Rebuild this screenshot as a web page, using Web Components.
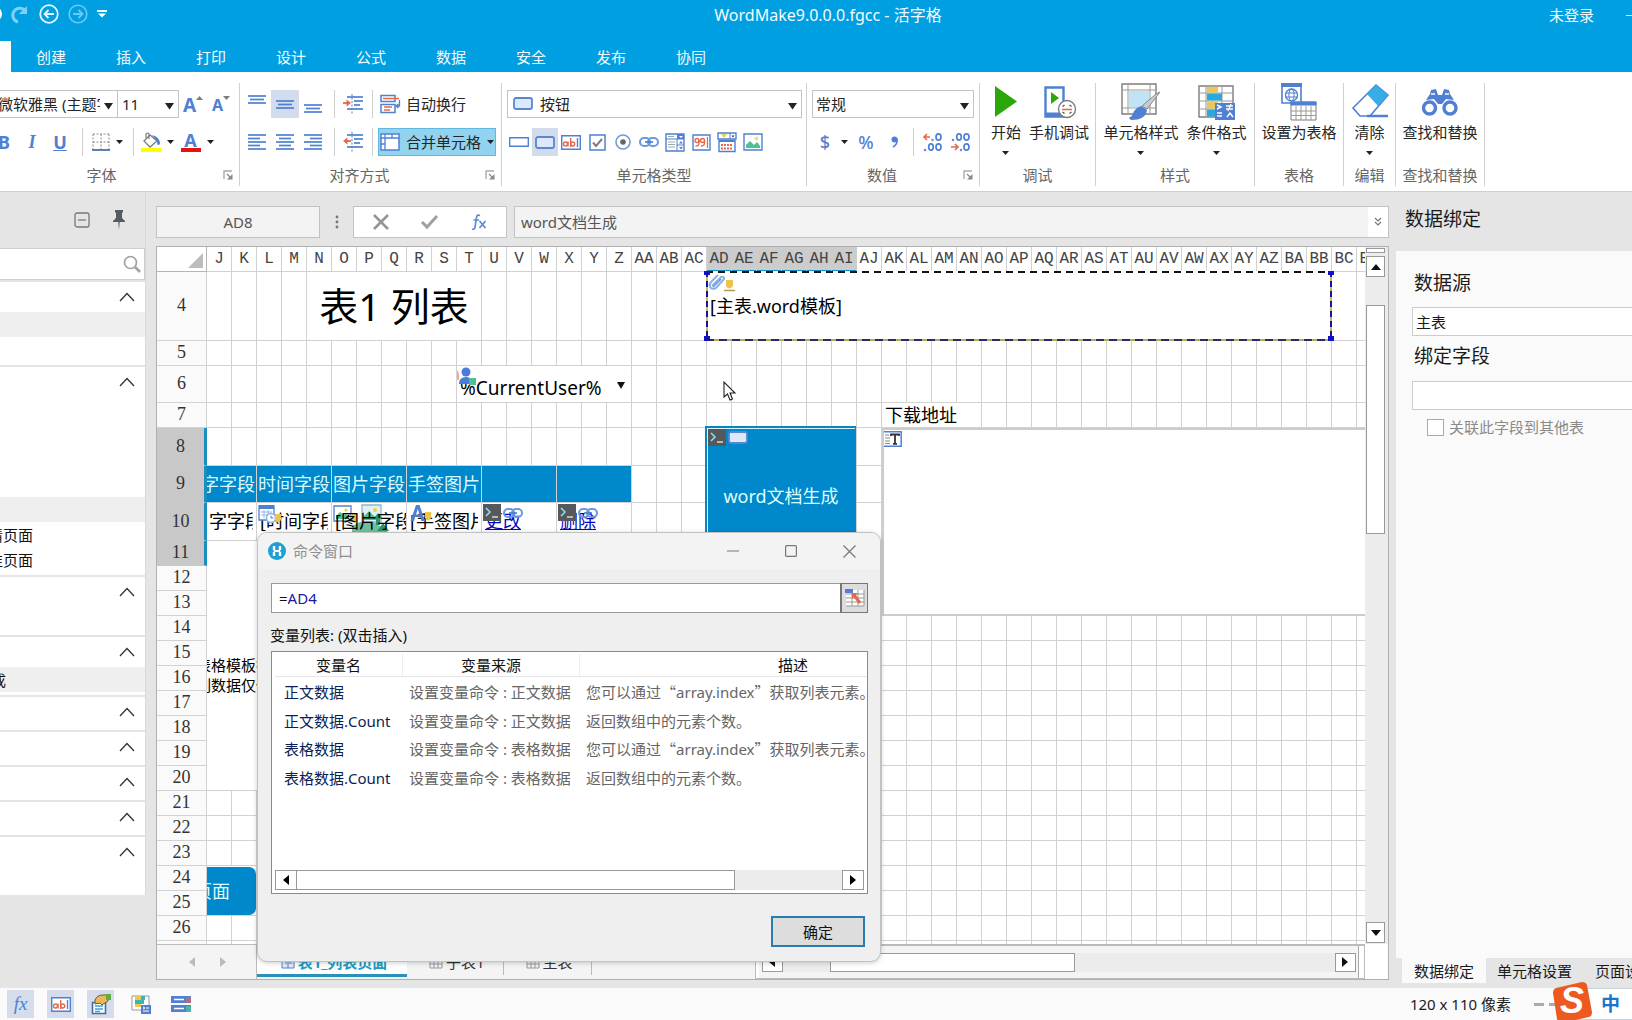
<!DOCTYPE html>
<html lang="zh-CN">
<head>
<meta charset="utf-8">
<title>WordMake9.0.0.0.fgcc - 活字格</title>
<style>
html,body{margin:0;height:100%}
body{font:15px/20px "Noto Sans","Noto Sans CJK SC",sans-serif;color:#262626;overflow:hidden;background:#e5e5e5}
</style>
</head>
<body>
<fg-app></fg-app>
<script>
const RESET = `*{box-sizing:border-box}
button,input,select{font:inherit;color:inherit;margin:0;padding:0;border:0;background:none;border-radius:0;outline:0}
button{display:flex;align-items:center;justify-content:center}
select{appearance:none}
fg-icon{flex:none}`;

function define(name, css, html, setup) {
  const tpl = document.createElement('template');
  customElements.define(name, class extends HTMLElement {
    connectedCallback() {
      if (this.shadowRoot) return;
      const root = this.attachShadow({ mode: 'open' });
      tpl.innerHTML = `<style>${RESET}${css}</style>` + (typeof html === 'function' ? html(this) : html);
      root.append(tpl.content.cloneNode(true));
      if (setup) setup(root, this);
    }
  });
}

const B = '#4f80d2', G = '#7d7d7d', O = '#e2694a';
const lines = (a) => `<g stroke="${B}" stroke-width="1.700">` + a.map(([x1, x2, y]) => `<path d="M${x1} ${y}H${x2}"/>`).join('') + '</g>';
/* name: [width, height, markup] */
const ICONS = {
  undo: [8, 20, '<circle cx="-6" cy="10" r="8" fill="#fff"/>'],
  redo: [20, 20, '<path d="M8 18A7 7 0 1 1 16 8" fill="none" stroke="#7fd0f4" stroke-width="3"/><path d="M17 2v8h-8z" fill="#7fd0f4"/>'],
  back: [20, 20, '<circle cx="10" cy="10" r="8.8" fill="none" stroke="#e6f7ff" stroke-width="1.8"/><path d="M15 10H6M9.500 6L5.500 10l4 4" fill="none" stroke="#e6f7ff" stroke-width="1.8"/>'],
  fwd: [20, 20, '<circle cx="10" cy="10" r="8.800" fill="none" stroke="#6cc9f3" stroke-width="1.600"/><path d="M5 10h9M10.500 6l4 4-4 4" fill="none" stroke="#6cc9f3" stroke-width="1.800"/>'],
  qat: [10, 8, '<path d="M0 1h10" stroke="#fff" stroke-width="2"/><path d="M1 3.500h8l-4 4z" fill="#fff"/>'],
  caret: [9, 7, '<path d="M0 0h9L4.500 6.500z" fill="#222"/>'],
  caretS: [7, 4, '<path d="M0 0h7L3.500 4z" fill="#222"/>'],
  caretM: [8, 7, '<path d="M0 0h8L4 7z" fill="#111"/>'],
  up: [7, 5, `<path d="M0 4h7L3.500 0z" fill="${G}"/>`],
  down: [7, 5, `<path d="M0 0h7L3.500 4z" fill="${G}"/>`],
  border: [18, 18, '<path d="M1 1h16M1 9h16M1 1v15M9 1v15M17 1v15" stroke="#8a8a8a" stroke-dasharray="2 1.500" fill="none"/><path d="M0 17h18" stroke="#5f7fae" stroke-width="2"/>'],
  bucket: [20, 20, `<path d="M3 9l6-6 7 6-7 6z" fill="#fff" stroke="${G}" stroke-width="1.300"/><path d="M5 6V2q2-2 3 0v5" fill="none" stroke="${G}" stroke-width="1.200"/><path d="M11 3q8 2 8 9-3 3-3-3z" fill="${B}"/><path d="M0 16h20v4H0z" fill="#ff0"/>`],
  atop: [18, 20, lines([[0, 18, 2], [2, 16, 5.500], [0, 18, 9]])],
  amid: [18, 20, lines([[0, 18, 7], [2, 16, 10.500], [0, 18, 14]])],
  abot: [18, 20, lines([[0, 18, 11], [2, 16, 14.500], [0, 18, 18]])],
  aleft: [18, 16, lines([[0, 18, 1], [0, 12, 4.500], [0, 18, 8], [0, 12, 11.500], [0, 18, 15]])],
  acenter: [18, 16, lines([[0, 18, 1], [3, 15, 4.500], [0, 18, 8], [3, 15, 11.500], [0, 18, 15]])],
  aright: [18, 16, lines([[0, 18, 1], [6, 18, 4.500], [0, 18, 8], [6, 18, 11.500], [0, 18, 15]])],
  indent: [20, 20, `<path d="M9 0v20" stroke="${B}" stroke-dasharray="2 1.500"/>` + lines([[4, 20, 3], [11, 20, 7], [11, 17, 11], [4, 20, 15]]) + `<path d="M0 9h6" stroke="${O}" stroke-width="1.800"/><path d="M3.500 5.500v7L8 9z" fill="${O}"/>`],
  outdent: [20, 20, `<path d="M9 0v20" stroke="${B}" stroke-dasharray="2 1.500"/>` + lines([[4, 20, 3], [11, 20, 7], [11, 17, 11], [4, 20, 15]]) + `<path d="M2 9h6" stroke="${O}" stroke-width="1.800"/><path d="M4.500 5.500v7L0 9z" fill="${O}"/>`],
  wrap: [20, 20, `<path d="M1 1.500h14v6H1zM1 10.500h14v8H1z" fill="#fff" stroke="${B}" stroke-width="1.500"/><path d="M3 4.500h16M4 13h8M4 16h6" stroke="${O}" stroke-width="1.400"/><path d="M19.500 6v6h-3M18.500 10l-2.500 2 2.500 2" fill="none" stroke="${B}" stroke-width="1.300"/>`],
  merge: [20, 18, `<path d="M1 1h18v16H1z" fill="#fff" stroke="${B}" stroke-width="1.500"/><path d="M1 5h18M5 1v16M12 1v4M1 11h4" stroke="${B}" stroke-width="1.300" fill="none"/>`],
  launch: [10, 10, '<path d="M1 9V1h8" fill="none" stroke="#aaa" stroke-width="1.400"/><path d="M4 4l3 3" stroke="#888" stroke-width="1.300"/><path d="M9.500 4v5.500H4z" fill="#888"/>'],
  rect: [20, 10, `<path d="M.7.700h18.600v8.600H.7z" fill="#fff" stroke="${B}" stroke-width="1.400"/>`],
  btn: [20, 13, `<rect x="1" y="1" width="18" height="11" rx="2" fill="#dce9fb" stroke="#5a86cf" stroke-width="1.800"/>`],
  ab: [20, 15, `<path d="M.7.700h18.600v13.600H.7z" fill="#fff" stroke="${B}" stroke-width="1.400"/><circle cx="4.500" cy="9" r="2" fill="none" stroke="${O}" stroke-width="1.400"/><path d="M7 6.500v5M9.700 3v9" stroke="${O}" stroke-width="1.400"/><circle cx="11.700" cy="9" r="2" fill="none" stroke="${O}" stroke-width="1.400"/><path d="M16.500 3v9" stroke="${B}" stroke-width="1.400"/>`],
  check: [17, 17, `<path d="M1 1h15v15H1z" fill="#fff" stroke="${B}" stroke-width="1.500"/><path d="M4 8.500l3 3.500 6-7" fill="none" stroke="${G}" stroke-width="2"/>`],
  radio: [16, 16, `<circle cx="8" cy="8" r="7" fill="#fff" stroke="#6f9add" stroke-width="1.600"/><circle cx="8" cy="8" r="2.800" fill="#666"/>`],
  link: [20, 10, `<rect x="1" y="1" width="10" height="8" rx="4" fill="none" stroke="#6c98de" stroke-width="2"/><rect x="9" y="1" width="10" height="8" rx="4" fill="none" stroke="#6c98de" stroke-width="2"/><path d="M6 5h8" stroke="#4a7bd0" stroke-width="1.600"/>`],
  combo: [20, 19, `<path d="M1 1h18v17H1z" fill="#fff" stroke="${B}" stroke-width="1.400"/><path d="M12 1h7v5h-7z" fill="${B}"/><path d="M14 3h4l-2 2z" fill="#fff"/><path d="M1 6h18M12 6v12M12 12h7" stroke="${B}"/><path d="M3 3.500h6M3 9h7M3 11.500h7M3 14h7" stroke="#9aa"/><path d="M14 10.500h4l-2-2.500zM14 14h4l-2 2.500z" fill="${B}"/>`],
  num: [19, 17, `<path d="M1 1h17v15H1z" fill="#fff" stroke="${B}" stroke-width="1.400"/><circle cx="5" cy="6.500" r="2" fill="none" stroke="${O}" stroke-width="1.300"/><circle cx="10.500" cy="6.500" r="2" fill="none" stroke="${O}" stroke-width="1.300"/><path d="M7 6v3q0 3-3.500 3M12.500 6v3q0 3-3.500 3" fill="none" stroke="${O}" stroke-width="1.300"/><path d="M15.500 3v11" stroke="${O}" stroke-width="1.200"/>`],
  date: [20, 20, `<path d="M1 1h18v6H1z" fill="#fff" stroke="${B}" stroke-width="1.400"/><path d="M4 2l3 4 3-4z" fill="#e8d14a"/><path d="M13 1v6" stroke="${B}"/><path d="M14.500 3.500h3L16 5.500z" fill="#333"/><path d="M2 8.500h16v11H2z" fill="#fff" stroke="${B}" stroke-width="1.400"/><path d="M2 9.500h16" stroke="${B}"/><path d="M4 13h12M4 16.500h12" stroke="${O}" stroke-width="1.800" stroke-dasharray="2 1"/>`],
  img: [20, 18, `<path d="M1 1h18v16H1z" fill="#fff" stroke="${B}" stroke-width="1.400"/><path d="M3 15v-3l4-4 4 4 3-3 3 4v2z" fill="#4fbf94"/><circle cx="13.500" cy="5.500" r="2" fill="#eadf96"/>`],
  comma: [7, 12, `<circle cx="3.500" cy="3.500" r="3" fill="${B}"/><path d="M6 3q1 5-4 8" fill="none" stroke="${B}" stroke-width="1.600"/>`],
  dec1: [20, 20, `<path d="M1 5h6M4 2L1 5l3 3" stroke="${O}" stroke-width="1.600" fill="none"/><g fill="none" stroke="${B}" stroke-width="1.700"><circle cx="9.500" cy="8" r=".4"/><ellipse cx="15.500" cy="5" rx="2.500" ry="3.200"/><circle cx="2" cy="18" r=".4"/><ellipse cx="8" cy="15" rx="2.300" ry="3.200"/><ellipse cx="15.500" cy="15" rx="2.500" ry="3.200"/></g>`],
  dec2: [20, 20, `<path d="M0 15h7M4 12l3 3-3 3" stroke="${O}" stroke-width="1.600" fill="none"/><g fill="none" stroke="${B}" stroke-width="1.700"><circle cx="2" cy="8" r=".4"/><ellipse cx="8" cy="5" rx="2.300" ry="3.200"/><ellipse cx="15.500" cy="5" rx="2.500" ry="3.200"/><circle cx="10" cy="18" r=".4"/><ellipse cx="15.500" cy="15" rx="2.500" ry="3.200"/></g>`],
  play: [22, 34, '<path d="M0 1v31L22 16.500z" fill="#2aa80a"/>'],
  phone: [30, 36, `<path d="M1.500 3.500h18v29h-18z" fill="#fff" stroke="${B}" stroke-width="2.400"/><path d="M1 28.500h19v4H1z" fill="${B}"/><path d="M7 8v12l8-6z" fill="#2aa80a"/><circle cx="23" cy="25" r="8.500" fill="#fff" stroke="${G}" stroke-width="1.400"/><path d="M18.500 22.500l2 -1.500M27.500 22.500l-2-1.500M18.500 28l2 1.500M27.500 28l-2 1.500" stroke="#555" stroke-width="1.300"/><path d="M18 25.500h10" stroke="${O}" stroke-width="1.500"/>`],
  cellstyle: [40, 38, `<path d="M1 1h34v30H1z" fill="#fff" stroke="${G}" stroke-width="1.400"/><path d="M7 1v30M29 1v30M1 7h34M1 25h34" stroke="#999"/><path d="M8 8h20v16H8z" fill="#c0e4f5"/><path d="M39 9L26 26l-5-3L35 11z" fill="#c9ccd0" stroke="#888"/><path d="M20 23l6 4q-1 10-16 10-3-2-1-3 2 0 4-6 3-4 7-5z" fill="${B}"/>`],
  cond: [38, 38, `<path d="M1 3h34v31H1z" fill="#fff" stroke="${G}" stroke-width="1.400"/><path d="M1 10h34M1 18h34M1 26h34M8 3v31M24 3v31" stroke="#999"/><path d="M9 3.700h11v6H9zM9 18.500h11v7H9z" fill="#e9c75a"/><path d="M9 10.500h15v7H9zM9 26.500h8v7H9z" fill="#29a9e0"/><path d="M17 20h20v17H17z" fill="${B}"/><path d="M19 22l4 2-4 2M19 30h5M19 33h5M28 23h7M28 26h7M33 21l-3 7M29 34l3-4 3 4" stroke="#fff" stroke-width="1.400" fill="none"/>`],
  fmt: [36, 38, `<path d="M1 1h19v19H1z" fill="#fff" stroke="${B}" stroke-width="1.600"/><path d="M0 0h21v4H0z" fill="${B}"/><circle cx="10.500" cy="12" r="6" fill="none" stroke="${B}" stroke-width="1.300"/><ellipse cx="10.500" cy="12" rx="2.600" ry="6" fill="none" stroke="${B}"/><path d="M4.500 10h12M4.500 14h12" stroke="${B}"/><path d="M10 19h25v18H10z" fill="#fff" stroke="${G}"/><path d="M9.500 18.500h26v4h-26z" fill="${B}"/><path d="M10 28h25M10 32.500h25M15 23v14M20 23v14M25 23v14M30 23v14" stroke="#999"/>`],
  eraser: [38, 36, `<path d="M2 24L25 1l12 10-18 21H9z" fill="#fff" stroke="${B}" stroke-width="1.600"/><path d="M25 1l12 10-10 11L16 10z" fill="#35aee8"/><path d="M16 32h21" stroke="${B}" stroke-width="2.500"/>`],
  find: [36, 30, `<g fill="#fff" stroke="${B}" stroke-width="3.400"><circle cx="7.500" cy="21" r="6"/><circle cx="28" cy="21" r="6"/></g><path d="M4 13l4-6 1-4 5-1 2 6h4l2-6 5 1 1 4 4 6-8-1-4 5h-4l-4-5z" fill="${B}"/><path d="M9 7h4M23 7h4" stroke="#fff" stroke-width="1.600"/>`],
  collapse: [16, 16, '<rect x="1" y="1" width="14" height="14" rx="2" fill="none" stroke="#777" stroke-width="1.300"/><path d="M4 8h8" stroke="#777" stroke-width="1.300"/>'],
  pin: [12, 20, '<path d="M2 0h8v2L9 3v5l3 3v1H0v-1l3-3V3L2 2zM5.300 12h1.400L6 20z" fill="#555b63"/>'],
  search: [18, 18, '<circle cx="7.500" cy="7.500" r="6" fill="none" stroke="#a2a2a2" stroke-width="1.700"/><path d="M12 12l5 5" stroke="#a2a2a2" stroke-width="2.600"/>'],
  chev: [16, 10, '<path d="M1 9l7-7.500L15 9" fill="none" stroke="#333" stroke-width="1.300"/>'],
  dots: [4, 14, '<g fill="#777"><circle cx="2" cy="2" r="1.400"/><circle cx="2" cy="7" r="1.400"/><circle cx="2" cy="12" r="1.400"/></g>'],
  no: [16, 16, '<path d="M1 1l14 14M15 1L1 15" stroke="#959595" stroke-width="2.600"/>'],
  yes: [17, 14, '<path d="M1 7l5 5L16 1" fill="none" stroke="#a0a0a0" stroke-width="3"/>'],
  fx: [16, 16, `<path d="M9 1.500q-3-1.500-3.500 2L4 13q-.5 3-3 2M2.500 6h5.500M8.500 7l6 7M14.500 7l-6 7" fill="none" stroke="#5b8ad6" stroke-width="1.700"/>`],
  expand: [8, 10, '<path d="M1 1l3 3 3-3M1 5l3 3 3-3" fill="none" stroke="#777" stroke-width="1.200"/>'],
  corner: [15, 15, '<path d="M15 0v15H0z" fill="#bdbdbd"/>'],
  term: [18, 17, '<path d="M0 0h18v17H0z" fill="#55585c"/><path d="M3 4l4 4-4 4" fill="none" stroke="#8fe0f0" stroke-width="1.500"/><path d="M9 13h6" stroke="#e8d9b0" stroke-width="1.500"/>'],
  clip: [18, 17, '<path d="M4 13l9-9q3-1 3 2l-8 9q-4 2-6-1-1-3 1-5l7-7" fill="none" stroke="#8ab0e8" stroke-width="2"/><path d="M5 14l8-8" stroke="#6f99db" stroke-width="1.600"/>'],
  bulb: [11, 13, '<path d="M2 1h7v6q-3.500 5-7 0z" fill="#ecc44d"/><path d="M0 11.500h11" stroke="#b59a45" stroke-width="1.500"/>'],
  user: [20, 20, '<path d="M0 2q4 4 3 12H0z" fill="#f3a8a8"/><circle cx="10" cy="6" r="4.500" fill="#4a7bd8"/><path d="M3 18q0-7 7-7t7 7z" fill="#4a7bd8"/><path d="M13 12h7v7h-7z" fill="#4fbf9a"/>'],
  cal: [24, 19, `<path d="M1 2h15v14H1z" fill="#fff" stroke="${B}" stroke-width="1.300"/><path d="M1 1h15v4H1z" fill="${B}"/><path d="M3 8h11M3 11h11M6 6v8M10 6v8" stroke="#9ab5e8"/><circle cx="13" cy="14" r="4.500" fill="#fff" stroke="#8ab0e8" stroke-width="1.500"/><path d="M13 11.500V14h2.500" stroke="${B}" fill="none"/><path d="M17 10h6v6q-3 5-6 0z" fill="#ecc44d"/>`],
  imgs: [56, 28, `<path d="M1 2h17v15H1z" fill="#fff" stroke="${B}" stroke-width="1.300"/><path d="M3 15v-3l4-4 4 3 2-1 3 3v2z" fill="#4fbf94"/><circle cx="13" cy="6" r="1.600" fill="#e8d14a"/><path d="M18 10h6v6q-3 5-6 0z" fill="#ecc44d"/><path d="M19 22l8-4h14l14 10H19z" fill="#55b58c" opacity=".85"/><path d="M29 1h19v17H29z" fill="#dff1f3" stroke="#8fb8cc" stroke-width="1.300"/><path d="M31 16v-4l5-5 5 5 5 4z" fill="#4fbf94"/><circle cx="42" cy="6" r="2" fill="#e8d14a"/><path d="M45 9l5 6h-3v6h-4v-6h-3zM50 19l6 8H44z" fill="#2d9468"/>`],
  sign: [24, 18, `<path d="M8 1h3.500L17 17h-3.500l-1.300-4H7.200L6 17H2.500zM8 10.500h3.500L9.800 5z" fill="${B}"/><path d="M17 8h6v6q-3 5-6 0z" fill="#ecc44d"/>`],
  tbox: [20, 16, `<path d="M.8.800h18.400v14.400H.8z" fill="#fff" stroke="${B}" stroke-width="1.500"/><path d="M3 4h4M3 7h5M3 10h5M3 12.500h5" stroke="#888"/><path d="M9 5V3.500h8V5M13 3.500v9M11 12.800h4" stroke="#333" stroke-width="1.800" fill="none"/>`],
  cursor: [13, 20, '<path d="M1 1v15l3.500-3 2.500 6 2.500-1-2.500-6H12z" fill="#fff" stroke="#222" stroke-width="1.100"/>'],
  tl: [7, 10, '<path d="M6 0v10L0 5z" fill="currentColor"/>'],
  tr: [7, 10, '<path d="M0 0v10l6-5z" fill="currentColor"/>'],
  tu: [10, 6, '<path d="M0 6h10L5 0z" fill="currentColor"/>'],
  td: [10, 6, '<path d="M0 0h10L5 6z" fill="currentColor"/>'],
  page: [14, 14, `<path d="M1 1h12v12H1z" fill="#e4ecfa" stroke="${B}"/><path d="M1 5h12M4 8h2M8 8h3M7 5v8" stroke="${B}"/>`],
  grid: [14, 14, '<path d="M1 1h12v12H1zM1 5h12M1 9h12M5 1v12M9 1v12" fill="none" stroke="#999"/>'],
  logo: [18, 18, '<circle cx="9" cy="9" r="9" fill="#1ea0d6"/><path d="M6 4v10M12 4v10" stroke="#fff" stroke-width="2.400" stroke-dasharray="4.300 1.400"/><path d="M6 9h6" stroke="#fff" stroke-width="1.800"/>'],
  min: [12, 12, '<path d="M0 6h12" stroke="#777"/>'],
  max: [12, 12, '<rect x=".6" y=".6" width="10.800" height="10.800" rx="1" fill="none" stroke="#777" stroke-width="1.200"/>'],
  close: [13, 13, '<path d="M.5.500l12 12M12.500.500l-12 12" stroke="#777" stroke-width="1.200"/>'],
  pick: [20, 18, `<path d="M1 1h18v16H1z" fill="#fff"/><path d="M1 5h18M1 9h18M1 13h18M1 17h18M7 1v16M13 1v16M19 1v16" stroke="#999"/><path d="M0 0h8v4H0z" fill="${B}"/><path d="M9 6l6 8" stroke="${O}" stroke-width="3"/><path d="M7 4h6l-6 6z" fill="${O}"/>`],
  hand: [20, 20, `<path d="M1.500 8.500h13v11h-13z" fill="#fff" stroke="#3f6fae" stroke-width="1.600"/><path d="M4 12h8M4 15h8M4 17.500h5" stroke="#3aa6e0" stroke-width="1.400"/><path d="M4 6q2-5 8-5h5v6l-6 4-2-2-5 1z" fill="#e9b95c" stroke="#7d5a1c"/><path d="M15 0h5v6h-5z" fill="#5fae3f"/>`],
  cond2: [20, 19, `<path d="M1 1h17v14H1z" fill="#fff" stroke="#999"/><path d="M4 1h6v4H4zM4 9h6v3H4z" fill="#e9c75a"/><path d="M4 5h9v4H4zM10 1h4v4h-4z" fill="#3ab5b0"/><path d="M10 10h10v9H10z" fill="${B}"/><path d="M12 12l2 1-2 1M12 16h6M15 13h3" stroke="#fff" fill="none"/>`],
  rows: [20, 18, `<path d="M0 1h20v7H0zM0 10h20v7H0z" fill="${B}"/><path d="M3 4.500h10M3 13.500h10" stroke="#fff" stroke-width="1.600"/><path d="M15 2h5v6h-5z" fill="${O}" opacity=".6"/><path d="M15 11h5v6h-5z" fill="#4fbf94" opacity=".8"/>`],
};
define('fg-icon', ':host{display:inline-block;line-height:0}svg{display:block;overflow:visible}', el => {
  const [w, h, m] = ICONS[el.getAttribute('name')];
  return `<svg width="${w}" height="${h}" viewBox="0 0 ${w} ${h}" aria-hidden="true">${m}</svg>`;
});
const I = n => `<fg-icon name="${n}"></fg-icon>`;

/* drop-down list with an optional leading icon */
define('fg-select', `
:host{display:grid;grid-template-columns:auto 1fr auto;align-items:center;height:28px;border:1px solid #c4c4c4;background:#fff;min-width:0}
select{grid-area:1/1/2/4;width:100%;height:26px;padding-left:var(--lead,4px);padding-right:17px;padding-bottom:1px}
.i{grid-area:1/1;padding-left:5px;pointer-events:none}.a{grid-area:1/3;padding-right:4px;pointer-events:none}
`, el => `<select aria-label="${el.getAttribute('label')}"><option>${el.getAttribute('value')}</option></select>
<span class="i">${el.hasAttribute('icon') ? I(el.getAttribute('icon')) : ''}</span><span class="a">${I('caret')}</span>`);

define('fg-header', `
:host{display:block;background:#009fe1;color:#f2fbff;height:72px;overflow:hidden}
.top{display:grid;grid-template-columns:1fr auto 1fr;align-items:center;height:30px}
.q{display:flex;gap:9px;align-items:center;padding-bottom:3px}.q button:first-child{width:1px;justify-content:flex-start}
.title{font-size:16px;padding-left:24px}
.r{display:flex;justify-content:flex-end;gap:32px;align-items:center}.r button+button{width:6px;height:1px;background:#e0f5ff}
nav{display:flex;padding-top:11px}
nav button{width:80px;height:31px;padding-top:1px}nav button:first-child{width:11px;background:#fff}
`, `<div class="top"><div class="q">${['undo', 'redo', 'back', 'fwd', 'qat'].map(n => `<button aria-label="${n}">${I(n)}</button>`).join('')}</div>
<span class="title">WordMake9.0.0.0.fgcc - 活字格</span>
<div class="r"><button>未登录</button><button aria-label="最小化"></button></div></div>
<nav><button aria-label="开始"></button>${['创建', '插入', '打印', '设计', '公式', '数据', '安全', '发布', '协同'].map(t => `<button>${t}</button>`).join('')}</nav>`);

/* ribbon group: content above a caption */
define('fg-group', `
:host{display:grid;grid-template-rows:82px 20px;height:103px;border-right:1px solid #d0d0d0;flex:none}
.b{min-width:0}
.c{display:flex;align-items:center;color:#666;white-space:nowrap;margin-left:var(--bleed,0)}
.c span{flex:1;text-align:center}.c fg-icon{padding:0 6px}
`, el => `<div class="b"><slot></slot></div><div class="c"><span>${el.getAttribute('caption')}</span>${el.hasAttribute('launch') ? I('launch') : ''}</div>`);

/* large ribbon button */
define('fg-big', `
:host{display:block;flex:none}
button{display:grid;grid-template-rows:38px 21px 22px;justify-items:center;align-items:center;padding:0 4px;white-space:nowrap}
`, el => `<button>${I(el.getAttribute('icon'))}<span><slot></slot></span>${el.hasAttribute('menu') ? I('caretS') : '<i></i>'}</button>`);

const ib = (n, c = '') => `<button class="ib ${c}" aria-label="${n}">${I(n)}</button>`;
define('fg-ribbon', `
:host{display:flex;background:#fff;height:120px;padding-top:11px;border-bottom:1px solid #cfcfcf;overflow:hidden}
.row{display:flex;align-items:center;height:28px}.rows{display:grid;gap:10px;padding-top:7px}
.ib{width:28px;height:28px;flex:none}.n{width:26px}.on{background:#d3dcec}
.sep{width:1px;height:28px;background:#cfcfcf;flex:none}
.t{font-weight:700;color:${B};font-size:18px}.t i{font-family:"Liberation Serif"}.m{font-weight:500}
.lab{gap:6px;height:28px;padding:0 6px 0 1px;white-space:nowrap}
.hot{background:#92d4f0;border:1px solid #62b8de;padding:0 4px 0 1px;width:118px;justify-content:space-between}
.bigs{display:flex;justify-content:center}
.f1{width:128px;margin-left:-10px}.f2{width:62px;margin-left:-1px}
.sp{display:flex;align-items:center;gap:6px;width:34px;flex:none}
.ac{width:20px;height:20px;display:flex;flex-direction:column;align-items:center;line-height:16px;border-bottom:4px solid #e81010}
.sz{align-items:flex-start;line-height:30px}.sz fg-icon{padding-top:6px}
`, `
<fg-group caption="字体" launch style="width:240px;--bleed:-14px"><div class="rows">
 <div class="row"><fg-select class="f1" label="字体" value="微软雅黑 (主题字体)" style="--lead:7px"></fg-select><fg-select class="f2" label="字号" value="11"></fg-select>
  <button class="ib t sz" style="font-size:19px" aria-label="增大字号">A${I('up')}</button><button class="ib t sz" style="font-size:16px" aria-label="减小字号">A${I('down')}</button></div>
 <div class="row" style="margin-left:-10px"><button class="ib t">B</button><button class="ib t"><i>I</i></button><button class="ib t"><u>U</u></button><span style="width:8px"></span><span class="sep"></span>
  <span style="width:7px"></span><button class="sp" aria-label="边框">${I('border')}${I('caretS')}</button><span style="width:9px"></span><span class="sep"></span><span style="width:6px"></span><button class="sp" aria-label="填充">${I('bucket')}${I('caretS')}</button>
  <span style="width:6px"></span><button class="sp" aria-label="字体颜色"><span class="ac t">A</span>${I('caretS')}</button></div>
</div></fg-group>
<fg-group caption="对齐方式" launch style="width:262px"><div class="rows">
 <div class="row" style="padding-left:3px">${ib('atop')}${ib('amid', 'on')}${ib('abot')}<span style="width:7px"></span><span class="sep"></span><span style="width:4px"></span>${ib('indent')}<span style="width:5px"></span><span class="sep"></span><span style="width:6px"></span><button class="lab">${I('wrap')}自动换行</button></div>
 <div class="row" style="padding-left:3px">${ib('aleft')}${ib('acenter')}${ib('aright')}<span style="width:7px"></span><span class="sep"></span><span style="width:4px"></span>${ib('outdent')}<span style="width:5px"></span><span class="sep"></span><span style="width:5px"></span><button class="lab hot">${I('merge')}合并单元格${I('caretS')}</button></div>
</div></fg-group>
<fg-group caption="单元格类型" style="width:305px"><div class="rows">
 <fg-select label="单元格类型" icon="btn" value="按钮" style="--lead:32px;margin:0 4px 0 5px"></fg-select>
 <div class="row" style="padding-left:4px">${ib('rect', 'n')}${ib('btn', 'n on')}${['ab', 'check', 'radio', 'link', 'combo', 'num', 'date', 'img'].map(n => ib(n, 'n')).join('')}</div>
</div></fg-group>
<fg-group caption="数值" launch style="width:173px"><div class="rows">
 <fg-select label="数值格式" value="常规" style="--lead:3px;margin:0 5px"></fg-select>
 <div class="row" style="padding-left:4px"><button class="ib t m">$</button><span style="width:2px"></span>${I('caretS')}<span style="width:4px"></span><button class="ib t m">%</button>${ib('comma')}<span style="width:5px"></span><span class="sep"></span><span style="width:5px"></span>${ib('dec1')}${ib('dec2')}</div>
</div></fg-group>
<fg-group caption="调试" style="width:116px"><div class="bigs" style="padding-left:5px"><fg-big icon="play" menu>开始</fg-big><fg-big icon="phone">手机调试</fg-big></div></fg-group>
<fg-group caption="样式" style="width:159px"><div class="bigs"><fg-big icon="cellstyle" menu>单元格样式</fg-big><fg-big icon="cond" menu>条件格式</fg-big></div></fg-group>
<fg-group caption="表格" style="width:89px"><div class="bigs"><fg-big icon="fmt">设置为表格</fg-big></div></fg-group>
<fg-group caption="编辑" style="width:52px"><div class="bigs"><fg-big icon="eraser" menu>清除</fg-big></div></fg-group>
<fg-group caption="查找和替换" style="width:89px"><div class="bigs"><fg-big icon="find">查找和替换</fg-big></div></fg-group>
`);

/* one collapsible block of the page tree; rows is "text|text|…", * marks a shaded row */
define('fg-section', `
:host{display:block;background:#fff;margin-top:2px;padding-bottom:3px}
.h{width:100%;height:30px;justify-content:flex-end;padding-right:10px}
.r{display:flex;justify-content:flex-end;align-items:center;height:25px;padding-right:112px;white-space:nowrap;color:#111;overflow:hidden}
.s{background:#efefef}.e{padding-right:139px}
`, el => `<button class="h" aria-label="折叠">${I('chev')}</button>` + (el.getAttribute('rows') || '').split('|').filter(t => t).map(t => `<div class="r ${t[0] === '*' ? 's' : ''} ${t === '*成' ? 'e' : ''}">${t.replace(/[*-]/, '')}</div>`).join(''));
define('fg-nav', `
:host{display:block;width:146px;flex:none;border-right:1px solid #d8d8d8;overflow:hidden;height:703px}
.top{display:flex;justify-content:flex-end;align-items:center;gap:23px;height:56px;padding-right:20px}
label{display:flex;align-items:center;background:#fff;height:32px;border:1px solid #cfcfcf;border-left:0;padding-right:3px}
input{flex:1;min-width:0}
`, `<div class="top">${I('collapse')}${I('pin')}</div>
<label><input aria-label="搜索">${I('search')}</label>
<fg-section rows="*|-"></fg-section><fg-section rows="-|-|-|-|*|情页面|准页面"></fg-section><fg-section rows="-"></fg-section><fg-section rows="*成"></fg-section>
<fg-section></fg-section><fg-section></fg-section><fg-section></fg-section><fg-section></fg-section><fg-section rows="-"></fg-section>`);

define('fg-formula', `
:host{display:flex;height:32px;color:#555}
.n,.f,.x{border:1px solid #c3c3c3;height:32px}
.n{width:164px;text-align:center;background:#f3f3f3}
.d{width:33px;display:flex;align-items:center;justify-content:center}
.x{width:154px;background:#fff;display:flex;justify-content:space-around;align-items:center;padding:0 3px}
.f{flex:1;margin-left:7px;background:#f3f3f3;display:flex}
.f input{flex:1;padding-left:6px}.f button{width:20px;background:#fff}
`, `<input class="n" aria-label="名称框" value="AD8"><span class="d">${I('dots')}</span>
<div class="x"><button aria-label="取消">${I('no')}</button><button aria-label="确认">${I('yes')}</button><button aria-label="插入函数">${I('fx')}</button></div>
<div class="f"><input aria-label="公式" value="word文档生成"><button aria-label="展开">${I('expand')}</button></div>`);

/* grid of cells; merged ranges are keyed by "row,column" with column 0 = J */
const colName = i => { i += 9; return (i >= 26 ? String.fromCharCode(64 + Math.floor(i / 26)) : '') + String.fromCharCode(65 + i % 26); };
const COLS = 47, H = { 4: 69, 6: 37, 8: 38, 9: 37, 10: 38 };
const M = {
  '4,4': [7, 1, 'title', '表1 列表'],
  '4,20': [25, 1, 'bind', `<span class="ic">${I('clip')}</span><span class="ic bulb">${I('bulb')}</span>[主表.word模板]<i class="ants"></i>`],
  '6,10': [7, 1, 'user', `<span class="ic">${I('user')}</span><div><span>%CurrentUser%</span>${I('caretM')}</div>`],
  '7,27': [4, 1, 'pad', '下载地址'],
  '9,0': [2, 1, 'hd', '<div>字字段</div>'], '9,2': [3, 1, 'hd', '<div>时间字段</div>'], '9,5': [3, 1, 'hd', '<div>图片字段</div>'], '9,8': [3, 1, 'hd', '<div>手签图片</div>'], '9,11': [3, 1, 'hd', ''], '9,14': [3, 1, 'hd', ''],
  '10,0': [2, 1, 'fd cut', '<div>字字段</div>'],
  '10,2': [3, 1, 'fd', `<div>[时间字段</div><span class="ic">${I('cal')}</span>`],
  '10,5': [3, 1, 'fd over', `<span class="ic">${I('imgs')}</span><div>[图片字段</div>`],
  '10,8': [3, 1, 'fd', `<div>[手签图片</div><span class="ic">${I('sign')}</span>`],
  '10,11': [3, 1, 'fd', `<div><a href="#">更改</a></div><span class="ic">${I('term')}${I('link')}</span>`],
  '10,14': [3, 1, 'fd', `<div><a href="#">删除</a></div><span class="ic">${I('term')}${I('link')}</span>`],
  '8,20': [6, 4, 'act', `<button><span class="ic">${I('term')}${I('btn')}</span>word文档生成</button>`],
  '8,27': [20, 6, 'area', `<span class="ic">${I('tbox')}</span>`],
  '11,0': [17, 10, 'note', '<div>表格模板行<br>列数据仅供</div>'],
  '24,0': [2, 2, 'pg', '<button>页面</button>'],
};
define('fg-grid', `
:host{display:block;overflow:hidden;background:#fff;min-width:0;min-height:0;position:relative;isolation:isolate}
table{border-collapse:separate;border-spacing:0;table-layout:fixed;width:1225px}
th,td{padding:0;border:0 solid #d2d2d2;border-width:0 1px 1px 0;height:25px;overflow:hidden;white-space:nowrap}
th{font-weight:400;background:#fafafa;color:#333;line-height:20px}
thead th{font:16px/22px "Liberation Mono",monospace;height:25px;background:#fff;color:#444}
thead th:first-child{text-align:right;vertical-align:bottom;line-height:0;padding:0 3px 3px 0;border-color:#b5b5b5}
tbody th{font-family:"Liberation Serif",serif;font-size:18px;padding-bottom:2px}
thead .cs{background:#ccc;border-right-color:#ccc;border-bottom:2px solid #0c8ec6}
.rs{background:#c8c8c8;border-bottom-color:#c8c8c8;border-right:3px solid #1a8fc0}
td{position:relative;font-size:18px;color:#000;line-height:20px;background:#fff}
.ic{position:absolute;left:1px;top:1px;display:flex;gap:2px;align-items:center}
.title{font-size:39px;line-height:62px;text-align:center}
.bind{padding-left:3px;overflow:visible;z-index:1}.bulb{left:17px;top:7px}
.ants{position:absolute;inset:-1px;background:
 repeating-linear-gradient(90deg,#111 0 7px,#fff 7px 12px) 0 0/100% 2px no-repeat,
 repeating-linear-gradient(90deg,#2b2b66 0 8px,#b5ad5e 8px 13px) 0 100%/100% 2px no-repeat,
 repeating-linear-gradient(#1515a5 0 6px,#c5bd60 6px 10px) 0 0/2px 100% no-repeat,
 repeating-linear-gradient(#1515a5 0 6px,#c5bd60 6px 10px) 100% 0/2px 100% no-repeat}
.ants::before,.ants::after{content:"";position:absolute;left:-2px;width:6px;top:0;bottom:0;background:linear-gradient(#1212c0 0 0) 0 0/6px 4px no-repeat,linear-gradient(#1212c0 0 0) 0 100%/6px 5px no-repeat}
.ants::after{left:auto;right:-2px}
.user{font-size:19px;vertical-align:bottom}.user div{display:flex;justify-content:space-between;align-items:center;padding:0 6px 4px 3px}
.user .ic{left:-1px;top:0}.user fg-icon[name=caretM]{padding-bottom:6px}
.pad{padding-left:3px}
.hd{background:#0088cc;color:#d9fbff;padding:0 1px 1px 2px}.hd div{display:flex;justify-content:flex-end}
.fd div{margin:0 3px 1px 3px;overflow:hidden}.fd.cut div{margin-left:0;text-indent:2px}.fd a{color:#0505c0}
.over div{position:relative;z-index:1;margin-right:0}
.act{overflow:visible;z-index:1}.act button{position:absolute;inset:-2px 0 0 -2px;background:#0088cc;color:#dff;border:2px solid #0b86bd;border-right-width:1px;box-shadow:inset 1px 1px #d8f4ff}
.area{border:2px solid #ccc;border-right:0}.area .ic{left:-2px;top:1px}
.note{vertical-align:top;font-size:15px;padding-top:114px}.note div{margin-left:-11px}
.pg button{width:49px;height:48px;background:#0088cc;color:#dff;border-radius:0 7px 7px 0;justify-content:flex-end;padding-right:26px;overflow:hidden}
.cursor{position:absolute;left:566px;top:134px}
`, () => {
  let h = `<table><colgroup><col style="width:50px">${'<col style="width:25px">'.repeat(COLS)}</colgroup><thead><tr><th>${I('corner')}</th>`;
  for (let c = 0; c < COLS; c++) h += `<th class="${c > 19 && c < 26 ? 'cs' : ''}">${colName(c)}</th>`;
  h += '</tr></thead><tbody>';
  const taken = new Set();
  for (let r = 4; r < 28; r++) {
    h += `<tr style="height:${H[r] || 25}px"><th class="${r > 7 && r < 12 ? 'rs' : ''}">${r < 27 ? r : ''}</th>`;
    for (let c = 0; c < COLS; c++) {
      if (taken.has(r + ',' + c)) continue;
      const m = M[r + ',' + c];
      if (!m) { h += '<td></td>'; continue; }
      for (let i = 0; i < m[1]; i++) for (let j = 0; j < m[0]; j++) taken.add((r + i) + ',' + (c + j));
      h += `<td colspan="${m[0]}" rowspan="${m[1]}" class="${m[2]}">${m[3]}</td>`;
    }
    h += '</tr>';
  }
  return h + `</tbody></table><span class="cursor">${I('cursor')}</span>`;
});

define('fg-sheet', `
:host{display:grid;grid-template:minmax(0,1fr) 35px/minmax(0,1fr) 23px;border:1px solid #b0b0b0;background:#fff;flex:1;min-height:0}
.v{display:flex;flex-direction:column;background:#ececec;padding:1px 3px 1px 1px}
.v b,.v i,.v button{border:1px solid #999;background:#fff;flex:none;color:#111}
.v b{height:5px;margin-bottom:3px}.v button{height:21px}.v .g{flex:28}.v .g2{flex:388}.v i{flex:227}
.bar{display:flex;background:#f4f4f4;border-top:1px solid #bbb;min-width:0}
.nv{width:100px;display:flex;justify-content:center;gap:24px;align-items:center;color:#bbb;border-right:1px solid #bbb;padding-left:2px}
.tab{gap:3px;height:30px;color:#333;border-right:1px solid #bbb;padding:4px 18px 0 22px}
.tab.on{background:#fff;color:#1a9cc4;font-weight:700;border:0;border-bottom:3px solid #2a92b8;height:32px;width:150px;padding:5px 0 0 4px}
.h{display:flex;align-items:center;margin-left:auto;width:610px;border-left:4px solid #fff;outline:1px solid #bbb;outline-offset:-1px;padding:0 0 0 3px}
.h button{width:21px;height:19px;border:1px solid #999;background:#fff;color:#111}
.h .tr{flex:1;display:flex;height:19px;background:#ececec;padding-left:47px}.h .tr i{width:245px;border:1px solid #999;background:#fff}
.h b{width:7px;border:1px solid #aaa;align-self:stretch;background:#fff;margin-left:2px}
`, `<fg-grid></fg-grid>
<div class="v"><b></b><button aria-label="上">${I('tu')}</button><span class="g"></span><i></i><span class="g2"></span><button aria-label="下">${I('td')}</button></div>
<div class="bar"><div class="nv">${I('tl')}${I('tr')}</div><button class="tab on">${I('page')}表1_列表页面</button><button class="tab">${I('grid')}子表1</button><button class="tab">${I('grid')}主表</button>
<div class="h"><button aria-label="左">${I('tl')}</button><div class="tr"><i></i></div><button aria-label="右">${I('tr')}</button><b></b></div></div><span></span>`);

define('fg-panel', `
:host{display:flex;flex-direction:column;width:236px;flex:none;color:#1a1a1a;overflow:hidden;white-space:nowrap}
h2,h3{font-weight:400;font-size:19px;line-height:28px;margin:0}
h2{height:59px;padding:13px 0 0 9px}
.b{background:#fafafa;flex:1;padding:18px 0 0 16px}
.b h3{padding-left:2px}
.f{width:100%;height:29px;border:1px solid #ccc;border-right:0;background:#fff;padding-left:3px;display:block;margin:10px 0 6px}
h3+.f.e{margin:11px 0 7px}
label.k{display:flex;align-items:center;gap:5px;padding-left:15px;color:#8a8a8a}
.k input{appearance:none;width:17px;height:17px;border:1px solid #aaa;background:#fff}
nav{display:flex;height:25px;margin-bottom:5px;padding-left:6px}
nav button{flex:none;padding:0 12px 0 11px}nav button:first-child{background:#fafafa;padding:0 12px}
`, `<h2>数据绑定</h2><div class="b"><h3><label for="s">数据源</label></h3><select class="f" id="s"><option>主表</option></select>
<h3><label for="t">绑定字段</label></h3><input class="f e" id="t"><label class="k"><input type="checkbox">关联此字段到其他表</label></div>
<nav><button>数据绑定</button><button>单元格设置</button><button>页面设置</button></nav>`);

const q = s => `<span class="q">${s}</span>`;
const idx = `您可以通过${q('“')}array.index${q('”')}获取列表元素。`, cnt = '返回数组中的元素个数。';
define('fg-dialog', `
:host{position:absolute;z-index:2;left:257px;top:532px;width:624px;height:430px;display:flex;flex-direction:column;background:#efefef;border:1px solid #c2c2c2;border-radius:10px;box-shadow:0 1px 5px #0003;color:#111;overflow:hidden}
header{display:flex;align-items:center;height:36px;padding:0 24px 0 10px;color:#8f8f8f;background:#f3f3f3;flex:none}
header span{margin:0 auto 0 7px}header button{margin-left:46px}
.in{display:flex;height:30px;margin:14px 12px 0 13px;border:1px solid #9a9a9a;background:#fff;align-items:center;padding-left:7px}
.in input{flex:1;color:#1a1a9c}.in button{width:26px;align-self:stretch;background:#ddd;border-left:1px solid #777;outline:1px solid #777}
p{margin:12px 12px 6px}
.l{flex:none;height:243px;margin:0 12px 0 13px;border:1px solid #868b93;background:#fff;display:flex;flex-direction:column;overflow:hidden;padding:3px}
.w{flex:1;overflow:hidden;margin:-1px -3px 0 0}
table{border-spacing:0;table-layout:fixed;width:732px;white-space:nowrap;color:#666}
th{font-weight:400;color:#111;height:23px;padding:0 0 1px;border-bottom:1px solid #e6e6e6;border-right:1px solid #eee}
td{padding:0 0 0 6px;height:29px}td:first-child{padding-left:9px;color:#0b1f55}
tr:nth-child(3) td{height:28px}
.q{font-family:"Noto Sans CJK SC"}
.s{display:flex;height:20px;background:#ececec;color:#000}.s button,.s i{border:1px solid #999;background:#fff}.s button{width:22px}.s i{flex:440;margin-left:-1px}.s b{flex:108}
.ok{width:94px;height:31px;border:2px solid #2b7cae;background:#ddd;margin:22px 15px 0 auto;flex:none}
`, `<header>${I('logo')}<span>命令窗口</span><button aria-label="最小化">${I('min')}</button><button aria-label="最大化">${I('max')}</button><button aria-label="关闭">${I('close')}</button></header>
<div class="in">=<input aria-label="公式" value="AD4"><button aria-label="选择">${I('pick')}</button></div>
<p>变量列表: (双击插入)</p>
<div class="l"><div class="w"><table><colgroup><col style="width:128px"><col style="width:177px"><col style="width:427px"></colgroup>
<thead><tr><th>变量名</th><th>变量来源</th><th>描述</th></tr></thead><tbody>
<tr><td>正文数据</td><td>设置变量命令 : 正文数据</td><td>${idx}</td></tr><tr><td>正文数据.Count</td><td>设置变量命令 : 正文数据</td><td>${cnt}</td></tr>
<tr><td>表格数据</td><td>设置变量命令 : 表格数据</td><td>${idx}</td></tr><tr><td>表格数据.Count</td><td>设置变量命令 : 表格数据</td><td>${cnt}</td></tr></tbody></table></div>
<div class="s"><button aria-label="左">${I('tl')}</button><i></i><b></b><button aria-label="右">${I('tr')}</button></div></div>
<button class="ok">确定</button>`);

define('fg-status', `
:host{display:flex;height:32px;background:#fafafa;align-items:center;padding-left:7px;gap:13px;flex:none;overflow:hidden;color:#1a1a1a}
button{width:27px;height:28px}.on{background:#d5ddec}.fx{font:italic 19px "Liberation Serif";color:${B}}
.px{margin-left:auto;margin-right:1px}.z{width:120px;display:flex;gap:5px;margin-right:-13px;padding-left:9px}.z i{width:10px;height:3px;background:#aaa}
`, `<button class="on fx">fx</button><button class="on" aria-label="文本">${I('ab')}</button><button class="on" aria-label="属性">${I('hand')}</button><button aria-label="条件">${I('cond2')}</button><button aria-label="行">${I('rows')}</button>
<span class="px">120 x 110 像素</span><span class="z"><i></i><i></i></span>`);

/* input-method badge floating over the window corner */
define('fg-ime', `
:host{position:absolute;z-index:3;right:0;bottom:0;display:flex;align-items:flex-end;height:38px}
svg{display:block;margin-right:-22px;z-index:1}
span{width:60px;height:32px;background:#fff;border:1px solid #c5d3dc;border-right:0;color:#1d74c8;font-size:19px;line-height:30px;padding-left:28px;font-weight:700}
`, `<svg width="42" height="38" viewBox="0 0 42 38"><path d="M4 6L30 0q4 0 5 3l5 27q0 4-3 5l-27 6q-4 0-5-4L1 11q0-4 3-5z" fill="#ec5a20"/><text x="20" y="31" text-anchor="middle" font-family="Liberation Sans" font-size="36" font-weight="700" font-style="italic" fill="#fff">S</text></svg><span>中</span>`);

define('fg-app', `
:host{display:flex;flex-direction:column;height:100vh;position:relative;overflow:hidden}
main{display:flex;flex:1;min-height:0}
.c{flex:1;min-width:0;display:flex;flex-direction:column;gap:8px;padding:14px 7px 8px 10px}
`, `<fg-header></fg-header><fg-ribbon></fg-ribbon><main><fg-nav></fg-nav><div class="c"><fg-formula></fg-formula><fg-sheet></fg-sheet></div><fg-panel></fg-panel></main><fg-status></fg-status><fg-dialog></fg-dialog><fg-ime></fg-ime>`);
</script>
</body>
</html>
